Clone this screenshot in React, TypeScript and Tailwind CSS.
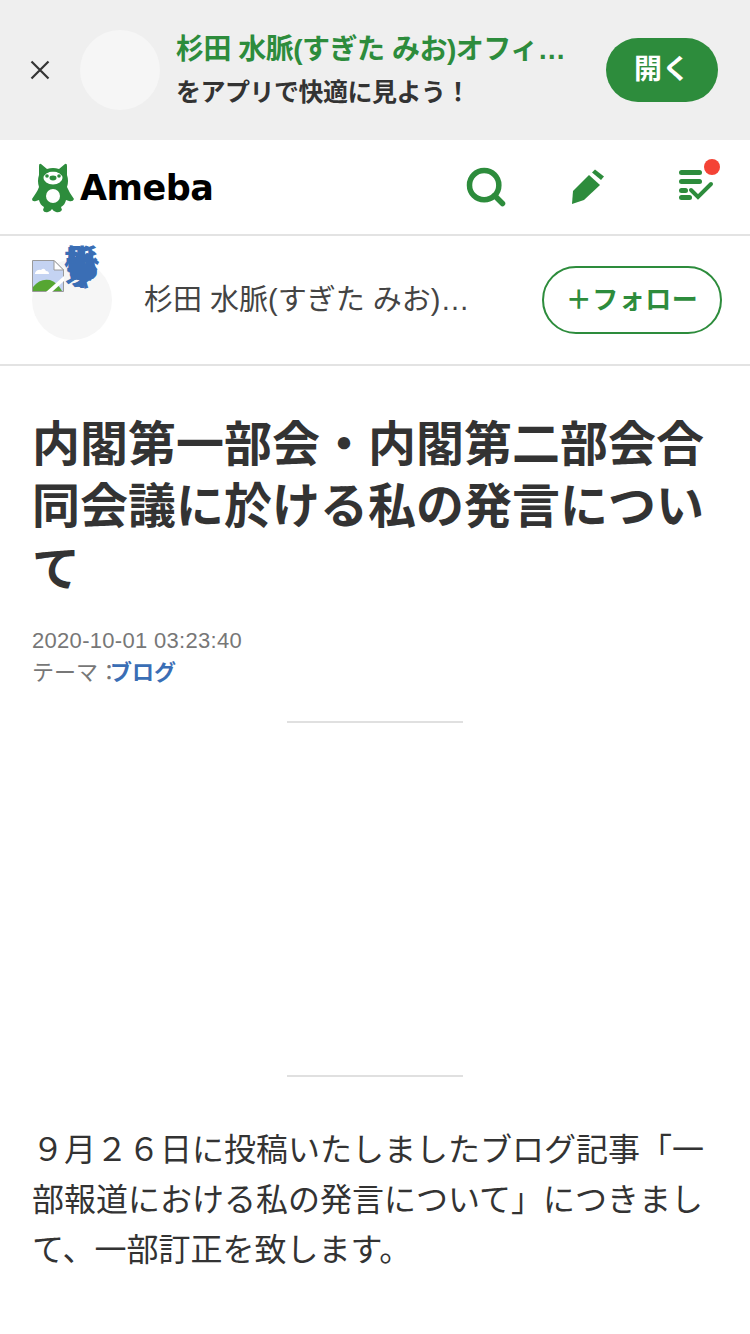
import { Search } from 'lucide-react';

const FONT = "font-['Liberation_Sans','Noto_Sans_CJK_JP',sans-serif]";

function Mascot() {
  return (
    <svg width="42" height="52" viewBox="0 0 42 52" className="shrink-0">
      <path d="M9 3 L15 8 Q21 6 27 8 L33 3 Q35 2 35 5 L35 14 Q37 20 35 26 Q37 30 38 32 L42 38 Q41 41 37 40 L34 39 Q33 44 29 46 L30 49 Q28 52 24 51 Q21 50 20 48 Q19 50 16 51 Q12 52 11 49 L12 46 Q8 44 7 39 L4 40 Q0 41 0 38 L4 32 Q6 29 7 26 Q5 20 7 14 L7 5 Q7 2 9 3 Z" fill="#2d8c3c" />
      <ellipse cx="21" cy="17" rx="9.5" ry="6.5" fill="#fff" />
      <path d="M11 13 Q21 8 31 13 L31 11 L11 11 Z" fill="#2d8c3c" />
      <circle cx="15" cy="15" r="1.8" fill="#2d8c3c" />
      <circle cx="27" cy="15" r="1.8" fill="#2d8c3c" />
      <ellipse cx="21" cy="17" rx="3.5" ry="2.4" fill="#2d8c3c" />
      <circle cx="21" cy="35" r="7" fill="#fff" />
    </svg>
  );
}

function BrokenImage() {
  return (
    <svg width="32" height="32" viewBox="0 0 32 32" className="absolute left-0 top-0">
      <path d="M0.5 0.5 H22 L31.5 10 V31.5 H0.5 Z" fill="#c4d3f2" stroke="#9a9a9a" />
      <path d="M22 0.5 V10 H31.5 Z" fill="#fff" stroke="#9a9a9a" />
      <path d="M3 13 Q5 9 9 10 Q12 7 14 11 Q17 11 17 14 H3 Z" fill="#fff" />
      <path d="M1 31 V27 Q8 18 18 20 Q26 23 30 31 Z" fill="#56a632" />
      <path d="M14 32 L32 16 V21 L20 32 Z" fill="#fff" />
    </svg>
  );
}

export default function App() {
  return (
    <div className={`w-[750px] h-[1334px] overflow-hidden bg-white ${FONT}`}>
      {/* App banner */}
      <div className="h-[140px] bg-[#efefef] flex items-center">
        <div className="w-[80px] flex justify-center shrink-0">
          <svg width="20" height="20" viewBox="0 0 20 20">
            <path d="M1.5 1.5 L18.5 18.5 M18.5 1.5 L1.5 18.5" stroke="#333" strokeWidth="2.2" />
          </svg>
        </div>
        <div className="w-[80px] h-[80px] rounded-full bg-[#f6f6f6] shrink-0" />
        <div className="w-[400px] ml-4 shrink-0">
          <p className="text-[28px] leading-[36px] font-bold text-[#2d8c3c] truncate tracking-[-0.5px]">
            杉田 水脈(すぎた みお)オフィシャルブログ
          </p>
          <p className="mt-[8px] text-[25px] leading-[32px] font-bold text-[#333] tracking-[-0.5px]">
            をアプリで快適に見よう！
          </p>
        </div>
        <div className="ml-[30px] w-[112px] h-[64px] rounded-full bg-[#2d8c3c] flex items-center justify-center text-white text-[28px] font-bold">
          開く
        </div>
      </div>

      {/* Header */}
      <div className="h-[96px] border-b-2 border-[#e3e3e3] flex items-center pl-[32px] pr-[36px]">
        <Mascot />
        <span className="ml-[6px] text-[35px] font-bold text-black font-['DejaVu_Sans',sans-serif] tracking-[-0.5px] mt-[2px]">
          Ameba
        </span>
        <div className="ml-auto flex items-center">
          <Search size={44} strokeWidth={3} className="text-[#2d8c3c]" />
          <svg width="36" height="36" viewBox="0 0 36 36" className="ml-[62px]">
            <path d="M2 35 L3 22 L19 6 L30 16 L14 31 Z" fill="#2d8c3c" />
            <path d="M22 3.5 L25 0.5 L34 7.5 L31 11 Z" fill="#2d8c3c" />
          </svg>
          <div className="relative ml-[72px] w-[36px] h-[36px]">
            <svg width="36" height="36" viewBox="0 0 36 36">
              <rect x="1" y="1" width="23" height="5" rx="2.5" fill="#2d8c3c" />
              <rect x="1" y="10" width="23" height="5" rx="2.5" fill="#2d8c3c" />
              <rect x="1" y="19" width="9" height="5" rx="2.5" fill="#2d8c3c" />
              <rect x="1" y="26" width="13" height="5" rx="2.5" fill="#2d8c3c" />
              <path d="M13 21 L20 28 L33 15" fill="none" stroke="#2d8c3c" strokeWidth="4" strokeLinecap="round" />
            </svg>
            <span className="absolute -top-[10px] left-[26px] w-[16px] h-[16px] rounded-full bg-[#f44336]" />
          </div>
        </div>
      </div>

      {/* Blog row */}
      <div className="h-[130px] border-b-2 border-[#e3e3e3] flex items-center pl-[32px]">
        <div className="relative w-[80px] h-[80px] rounded-full bg-[#f6f6f6] shrink-0">
          <BrokenImage />
          <div className="absolute left-[32px] -top-[15px] w-[44px] text-[#3a6eb5] text-[28px] leading-[2px] pt-[15px] font-bold tracking-[-26px] whitespace-nowrap">
            <p className="h-[8px]">杉田水脈</p>
            <p className="h-[8px]">すぎたみお</p>
            <p className="h-[8px]">オフィシャ</p>
          </div>
        </div>
        <p className="ml-[32px] w-[344px] text-[29px] leading-[40px] text-[#444] truncate shrink-0">
          杉田 水脈(すぎた みお)オフィシャルブログ
        </p>
        <div className="ml-[54px] w-[180px] h-[68px] rounded-full border-2 border-[#2d8c3c] flex items-center justify-center text-[#2d8c3c] text-[26px] font-bold tracking-[0.5px]">
          ＋フォロー
        </div>
      </div>

      {/* Article */}
      <div className="px-[32px] pt-[48px]">
        <h1 className="text-[48px] leading-[62.4px] font-bold text-[#333] tracking-[0px]">
          内閣第一部会・内閣第二部会合同会議に於ける私の発言について
        </h1>
        <p className="mt-[24px] text-[22px] leading-[32px] text-[#777] tracking-[0.3px]">2020-10-01 03:23:40</p>
        <p className="text-[22px] leading-[32px] text-[#777]">
          テーマ：<span className="font-bold text-[#3a6eb5] -ml-[10px]">ブログ</span>
        </p>
        <div className="mt-[32px] mx-auto w-[176px] h-[2px] bg-[#e0e0e0]" />
        <div className="h-[352px]" />
        <div className="mx-auto w-[176px] h-[2px] bg-[#e0e0e0]" />
        <p className="mt-[48px] text-[32px] leading-[50px] text-[#333]">
          ９月２６日に投稿いたしましたブログ記事「一部報道における私の発言について」につきまして、一部訂正を致します。
        </p>
      </div>
    </div>
  );
}
